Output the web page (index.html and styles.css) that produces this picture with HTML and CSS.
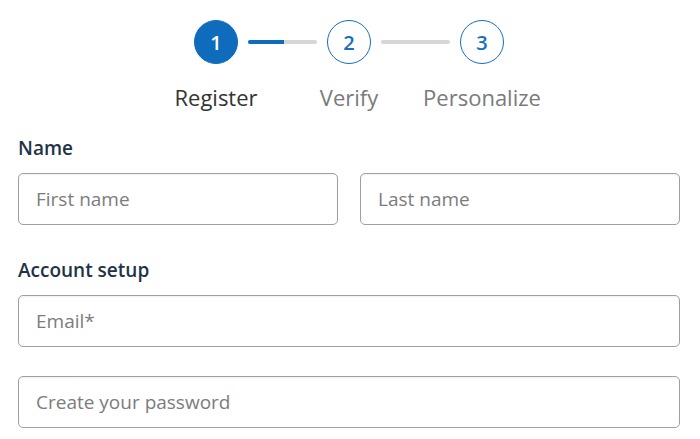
FILE: index.html
```html
<!DOCTYPE html>
<html>
<head>
<meta charset="utf-8">
<link rel="stylesheet" href="styles.css">
</head>
<body>
<div class="page">
  <div class="stepper">
    <div class="step">
      <div class="circle active">1</div>
      <div class="step-label current">Register</div>
    </div>
    <div class="line"><div class="line-fill"></div></div>
    <div class="step">
      <div class="circle">2</div>
      <div class="step-label">Verify</div>
    </div>
    <div class="line"></div>
    <div class="step">
      <div class="circle">3</div>
      <div class="step-label">Personalize</div>
    </div>
  </div>

  <div class="section first">
    <div class="section-label">Name</div>
    <div class="row">
      <input class="field" type="text" placeholder="First name">
      <input class="field" type="text" placeholder="Last name">
    </div>
  </div>

  <div class="section">
    <div class="section-label">Account setup</div>
    <div class="stack">
      <input class="field" type="email" placeholder="Email*">
      <input class="field" type="password" placeholder="Create your password">
    </div>
  </div>
</div>
</body>
</html>
```
FILE: styles.css
```css
html, body {
  margin: 0;
  padding: 0;
  background: #ffffff;
  overflow: hidden;
}
body {
  font-family: "Open Sans", "Liberation Sans", sans-serif;
}
.page {
  padding: 20px 20px 0 18px;
  display: flex;
  flex-direction: column;
}
.stepper {
  display: flex;
  justify-content: center;
  align-items: flex-start;
  gap: 10px;
}
.step {
  width: 44px;
  display: flex;
  flex-direction: column;
  align-items: center;
}
.circle {
  width: 44px;
  height: 44px;
  box-sizing: border-box;
  border-radius: 50%;
  border: 1.5px solid #1570bd;
  color: #1570bd;
  display: flex;
  align-items: center;
  justify-content: center;
  font-size: 20px;
  font-weight: 600;
}
.circle.active {
  background: #0f6cbd;
  border-color: #0f6cbd;
  color: #ffffff;
}
.step-label {
  margin-top: 19px;
  white-space: nowrap;
  font-size: 22px;
  color: #7a7a7a;
  line-height: 28px;
}
.step-label.current {
  color: #333333;
}
.line {
  width: 69px;
  height: 4px;
  margin-top: 20px;
  background: #d6d6d6;
  border-radius: 2px;
  overflow: hidden;
}
.line-fill {
  width: 36px;
  height: 100%;
  background: #0f6cbd;
}
.section {
  display: flex;
  flex-direction: column;
  margin-top: 33px;
}
.section.first {
  margin-top: 25px;
}
.section-label {
  font-size: 19px;
  font-weight: 600;
  color: #1f3347;
  line-height: 24px;
  margin-bottom: 13px;
}
.row {
  display: flex;
  gap: 22px;
}
.stack {
  display: flex;
  flex-direction: column;
  gap: 29px;
}
.field {
  display: block;
  width: 100%;
  min-width: 0;
  height: 52px;
  box-sizing: border-box;
  border: 1.5px solid #a0a0a0;
  border-radius: 5px;
  padding: 0 17px;
  font-family: "Open Sans", "Liberation Sans", sans-serif;
  font-size: 19px;
  color: #333;
  background: #fff;
  box-shadow: inset 0 1px 2px rgba(0,0,0,0.06);
  outline: none;
}
.row .field {
  flex: 1;
}
.field::placeholder {
  color: #7c7c7c;
}
```
